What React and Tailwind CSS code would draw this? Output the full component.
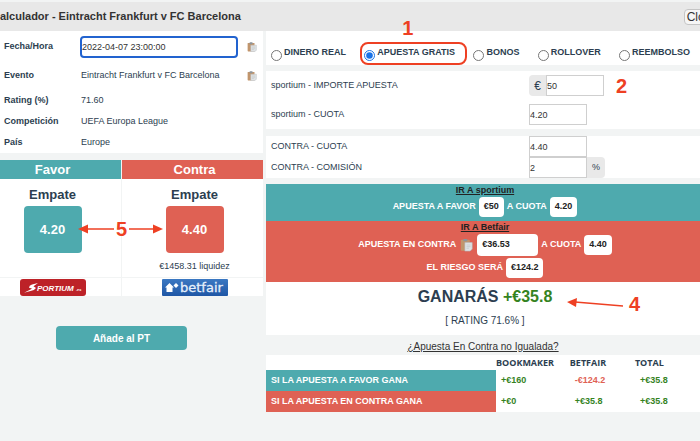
import React, { useState } from "react";

const BET_TYPES = ["DINERO REAL", "APUESTA GRATIS", "BONOS", "ROLLOVER", "REEMBOLSO"];

const OUTCOMES = [
  { label: "SI LA APUESTA A FAVOR GANA", color: "bg-[#4eaaae]", values: ["+€160", "-€124.2", "+€35.8"] },
  { label: "SI LA APUESTA EN CONTRA GANA", color: "bg-[#df6154]", values: ["+€0", "+€35.8", "+€35.8"] },
];

function CopyIcon() {
  return (
    <svg viewBox="0 0 16 16" className="h-full w-full" aria-hidden="true">
      <rect x="1" y="1.5" width="11" height="13.5" rx="1" fill="#c1956c" />
      <rect x="4" y="0.5" width="5" height="3" rx="1" fill="#8d949b" />
      <path d="M6 5h9v8l-2.5 2.5H6z" fill="#dfe2e4" stroke="#b5babd" strokeWidth="0.7" />
      <path d="M8 8h5M8 10h5M8 12h3" stroke="#bfc4c7" strokeWidth="0.8" />
    </svg>
  );
}

function CopyButton({ label, className = "h-3 w-3" }) {
  return (
    <button type="button" aria-label={label} className={className}>
      <CopyIcon />
    </button>
  );
}

function SportiumLogo() {
  return (
    <svg viewBox="0 0 66 17" className="h-[17px] w-[66px]" role="img" aria-label="Sportium">
      <rect width="66" height="17" rx="3" fill="#bd2228" />
      <path d="M4 13.8 L10.5 10.6 L12 9.6 L9 8.8 Q9 6.5 12 5.6 L18 4 L13.5 7.3 L16 9 Q14.5 11.5 10.5 12 Z" fill="#fff" />
      <text x="17" y="11.5" fill="#fff" fontFamily="Liberation Sans, sans-serif" fontWeight="700" fontStyle="italic" fontSize="8">
        PORTIUM
      </text>
      <text x="56" y="11.5" fill="#fff" fontFamily="Liberation Sans, sans-serif" fontWeight="700" fontStyle="italic" fontSize="4">
        .es
      </text>
    </svg>
  );
}

function BetfairLogo() {
  return (
    <svg viewBox="0 0 66 17" className="h-[17px] w-[66px]" role="img" aria-label="Betfair">
      <defs>
        <linearGradient id="betfair-bg" x1="0" y1="0" x2="0" y2="1">
          <stop offset="0" stopColor="#3b78c2" />
          <stop offset="1" stopColor="#1f56a5" />
        </linearGradient>
      </defs>
      <rect width="66" height="17" rx="1" fill="url(#betfair-bg)" />
      <path d="M7.5 4 L12 8.5 H10.5 V13 H4.5 V8.5 H3 Z" fill="#fff" />
      <path d="M11.5 6.5 L14 4 L16.5 6.5 L14 9 Z" fill="#fff" />
      <text x="18" y="13" fill="#e6f0fb" stroke="#e6f0fb" strokeWidth="0.3" fontFamily="DejaVu Sans, sans-serif" fontSize="13">
        betfair
      </text>
    </svg>
  );
}

function Arrow({ className, width, height, from, to, head }) {
  return (
    <svg width={width} height={height} className={className} aria-hidden="true">
      <line x1={from[0]} y1={from[1]} x2={to[0]} y2={to[1]} stroke="#ee4023" strokeWidth="1.5" />
      <path d={head} fill="#ee4023" />
    </svg>
  );
}

function InfoRow({ label, children, className = "h-[21px]" }) {
  return (
    <div className={`flex items-center ${className}`}>
      <dt className="w-[77px] shrink-0 font-bold">{label}</dt>
      <dd className="flex flex-1 items-center justify-between">{children}</dd>
    </div>
  );
}

function Field({ id, label, value, onChange, prefix, suffix, note }) {
  return (
    <div className="flex h-[21px] items-center">
      <label htmlFor={id} className="flex-1">{label}</label>
      <div className="flex w-[166px] items-center">
        {prefix && <span className="flex h-[21px] w-[17px] items-center justify-center rounded-l bg-[#e9e9e9] text-xs">{prefix}</span>}
        <input
          id={id}
          value={value}
          onChange={(e) => onChange(e.target.value)}
          className="h-[21px] w-[58px] border border-[#cfcfcf] bg-white text-[#333]"
        />
        {suffix && <span className="flex h-[21px] w-[18px] items-center justify-center rounded-r bg-[#e9e9e9]">{suffix}</span>}
        {note}
      </div>
    </div>
  );
}

function Pill({ children, className = "h-5" }) {
  return (
    <span className={`flex items-center rounded bg-white px-[5px] text-[#222] ${className}`}>{children}</span>
  );
}

function Side({ title, color, odds, extra, className }) {
  return (
    <div className="bg-white">
      <h2 className={`text-center text-[13px] leading-[19px] font-bold text-white ${color} ${className}`}>{title}</h2>
      <div className={`flex flex-col items-center ${className}`}>
        <p className="mt-2 text-[13px] leading-[15px] font-bold">Empate</p>
        <button type="button" className={`mt-1 h-[47px] w-[58px] rounded text-[13px] font-bold text-white ${color}`}>{odds}</button>
        <p className="mt-2 h-4 leading-[11px]">{extra}</p>
      </div>
    </div>
  );
}

export default function App() {
  const [date, setDate] = useState("2022-04-07 23:00:00");
  const [betType, setBetType] = useState("APUESTA GRATIS");
  const [stake, setStake] = useState("50");
  const [backOdds, setBackOdds] = useState("4.20");
  const [layOdds, setLayOdds] = useState("4.40");
  const [commission, setCommission] = useState("2");

  return (
    <div className="min-h-screen overflow-hidden bg-[#f2f4f4] font-['Liberation_Sans',Arial,sans-serif] text-[9px] text-[#2c3e50]">
      <header className="mt-[2px] flex h-[29px] items-center justify-between bg-[#e8e8e8]">
        <h1 className="-ml-2 text-[11px] font-bold whitespace-nowrap text-[#333]">Calculador - Eintracht Frankfurt v FC Barcelona</h1>
        <button type="button" className="-mr-5 h-4 w-9 shrink-0 rounded-sm border border-[#c5c5c5] bg-[#f6f6f6] text-xs leading-3 text-[#333]">Close</button>
      </header>

      <main className="grid grid-cols-[38%_1fr]">
        <section className="pr-[3px]">
          <dl className="bg-white pt-px pl-1">
            <InfoRow label={<label htmlFor="date">Fecha/Hora</label>} className="h-[30px]">
              <input
                id="date"
                value={date}
                onChange={(e) => setDate(e.target.value)}
                className="-ml-px h-[22px] w-[158px] rounded-sm border-2 border-[#2263cf] bg-white text-[#333]"
              />
              <CopyButton label="Copiar fecha" className="mr-[6px] h-[10px] w-[10px]" />
            </InfoRow>
            <InfoRow label="Evento" className="h-7">
              <span>Eintracht Frankfurt v FC Barcelona</span>
              <CopyButton label="Copiar evento" className="mr-[6px] h-[10px] w-[10px]" />
            </InfoRow>
            <InfoRow label="Rating (%)">71.60</InfoRow>
            <InfoRow label="Competición">UEFA Europa League</InfoRow>
            <InfoRow label="País">Europe</InfoRow>
          </dl>

          <div className="relative mt-[7px] grid grid-cols-[121px_1fr] gap-x-px">
            <Side title="Favor" color="bg-[#4eaaae]" odds="4.20" className="pr-4" />
            <Side title="Contra" color="bg-[#df6154]" odds="4.40" extra="€1458.31 liquidez" className="pl-1" />
            <div className="absolute top-[58px] left-[78px] flex items-center text-[#ee4023]">
              <Arrow width={36} height={10} from={[8, 5]} to={[36, 5]} head="M0 5 L10 0.5 V9.5 Z" />
              <span className="px-[2px] text-xl leading-[22px] font-bold">5</span>
              <Arrow width={34} height={10} from={[0, 5]} to={[26, 5]} head="M34 5 L24 0.5 V9.5 Z" />
            </div>
            <a href="#sportium" className="mt-px flex h-[18px] items-center justify-center bg-white pr-4"><SportiumLogo /></a>
            <a href="#betfair" className="mt-px flex h-[18px] items-center justify-center bg-white pl-1"><BetfairLogo /></a>
          </div>

          <div className="mt-[30px] flex justify-center pr-5">
            <button type="button" className="h-6 w-[131px] rounded bg-[#4eaaae] text-[10px] font-bold text-white">Añade al PT</button>
          </div>
        </section>

        <section>
          <fieldset className="flex h-[34px] items-center justify-between bg-white pt-[10px] pr-[10px] pl-[5px]">
            {BET_TYPES.map((type) => (
              <label key={type} className="relative flex items-center gap-[2px] font-bold whitespace-nowrap">
                <input
                  type="radio"
                  name="bet-type"
                  checked={betType === type}
                  onChange={() => setBetType(type)}
                  className="mt-1 h-[11px] w-[11px] accent-[#1a73e8]"
                />
                {type}
                {betType === type && (
                  <span className="absolute -inset-y-1 -right-3 -left-1 rounded-lg border-2 border-[#ee4023]">
                    <span className="absolute -top-7 left-0 w-full pr-3 text-center text-xl leading-6 text-[#ee4023]">1</span>
                  </span>
                )}
              </label>
            ))}
          </fieldset>

          <div className="mt-[6px] flex flex-col gap-2 bg-white px-[5px] py-1">
            <Field
              id="stake"
              label="sportium - IMPORTE APUESTA"
              value={stake}
              onChange={setStake}
              prefix="€"
              note={<span className="ml-3 text-xl leading-5 font-bold text-[#ee4023]">2</span>}
            />
            <Field id="back-odds" label="sportium - CUOTA" value={backOdds} onChange={setBackOdds} />
          </div>

          <div className="mt-[7px] bg-white px-[5px]">
            <Field id="lay-odds" label="CONTRA - CUOTA" value={layOdds} onChange={setLayOdds} />
            <Field id="commission" label="CONTRA - COMISIÓN" value={commission} onChange={setCommission} suffix="%" />
          </div>

          <div className="mt-[6px] flex h-[37px] flex-col items-center bg-[#4eaaae] pl-1 font-bold text-white">
            <a href="#sportium" className="leading-[13px] text-[#222] underline">IR A sportium</a>
            <p className="flex items-center gap-[3px]">
              APUESTA A FAVOR <Pill>€50</Pill> A CUOTA <Pill>4.20</Pill>
            </p>
          </div>
          <div className="flex h-[61px] flex-col items-center bg-[#df6154] pl-1 font-bold text-white">
            <a href="#betfair" className="leading-[13px] text-[#222] underline">IR A Betfair</a>
            <p className="flex items-center gap-[3px]">
              APUESTA EN CONTRA <CopyButton label="Copiar importe" className="mx-px h-[14px] w-[13px]" />
              <Pill className="h-[22px] w-[61px]">€36.53</Pill> A CUOTA <Pill>4.40</Pill>
            </p>
            <p className="mt-[2px] flex items-center gap-[3px]">
              EL RIESGO SERÁ <Pill>€124.2</Pill>
            </p>
          </div>

          <div className="relative h-[53px] bg-white pl-1 text-center">
            <p className="pt-[6px] text-base leading-[18px] font-bold">
              GANARÁS <span className="text-[#35831f]">+€35.8</span>
            </p>
            <p className="mt-[9px] text-[10px] leading-3">[ RATING 71.6% ]</p>
            <div className="absolute top-[10px] right-[60px] flex items-center text-[#ee4023]">
              <Arrow width={56} height={12} from={[8, 4]} to={[56, 8]} head="M0 4 L10 0 L9 9 Z" />
              <span className="ml-[6px] text-xl leading-6 font-bold">4</span>
            </div>
          </div>

          <p className="mt-1 text-center text-[10px] leading-4">
            <a href="#no-igualada" className="text-[#333] underline">¿Apuesta En Contra no Igualada?</a>
          </p>

          <table className="w-full table-fixed bg-white text-left font-bold">
            <thead>
              <tr className="h-[15px] font-['Open_Sans',sans-serif]">
                <th className="w-[53%]"></th>
                <th className="w-[17%]">BOOKMAKER</th>
                <th className="w-[15%]">BETFAIR</th>
                <th className="w-[15%]">TOTAL</th>
              </tr>
            </thead>
            <tbody>
              {OUTCOMES.map(({ label, color, values }) => (
                <tr key={label} className="h-[21px]">
                  <th scope="row" className={`pl-[5px] text-white ${color}`}>{label}</th>
                  {values.map((value, i) => (
                    <td key={i} className={`pl-[5px] ${value.startsWith("-") ? "text-[#df6154]" : "text-[#35831f]"}`}>{value}</td>
                  ))}
                </tr>
              ))}
            </tbody>
          </table>
        </section>
      </main>
    </div>
  );
}
